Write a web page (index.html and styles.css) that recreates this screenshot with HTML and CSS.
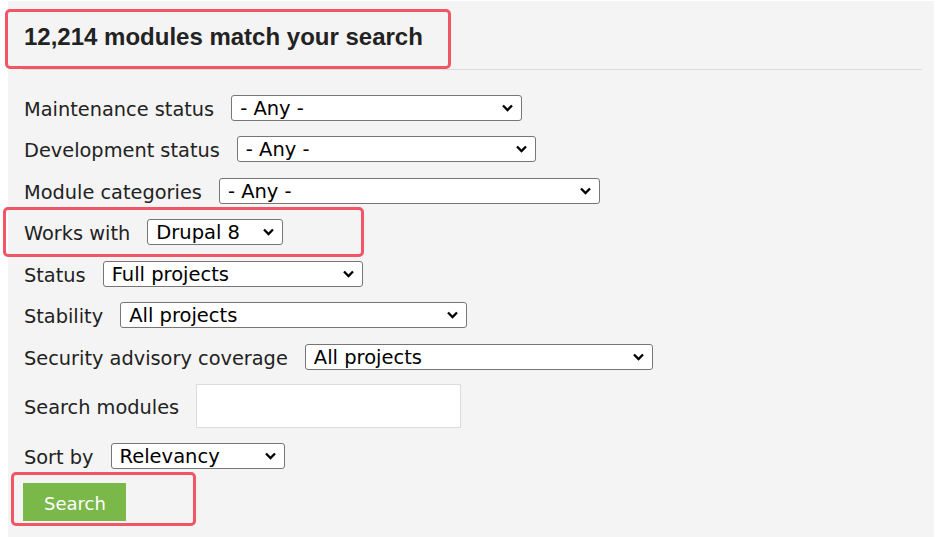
FILE: index.html
```html
<!DOCTYPE html>
<html lang="en">
<head>
<meta charset="utf-8">
<title>Module search</title>
<link rel="stylesheet" href="styles.css">
</head>
<body>
<div class="panel">
  <h2 class="result-count">12,214 modules match your search</h2>
  <form class="filters">
    <div class="row">
      <label class="label">Maintenance status</label>
      <span class="select-wrap w-maint"><select class="select"><option>- Any -</option></select><svg class="chev" viewBox="0 0 12 8"><path d="M1.5 1.5l4.5 4.5 4.5-4.5" /></svg></span>
    </div>
    <div class="row">
      <label class="label">Development status</label>
      <span class="select-wrap w-dev"><select class="select"><option>- Any -</option></select><svg class="chev" viewBox="0 0 12 8"><path d="M1.5 1.5l4.5 4.5 4.5-4.5" /></svg></span>
    </div>
    <div class="row">
      <label class="label">Module categories</label>
      <span class="select-wrap w-cat"><select class="select"><option>- Any -</option></select><svg class="chev" viewBox="0 0 12 8"><path d="M1.5 1.5l4.5 4.5 4.5-4.5" /></svg></span>
    </div>
    <div class="row">
      <label class="label">Works with</label>
      <span class="select-wrap w-works"><select class="select"><option>Drupal 8</option></select><svg class="chev" viewBox="0 0 12 8"><path d="M1.5 1.5l4.5 4.5 4.5-4.5" /></svg></span>
    </div>
    <div class="row">
      <label class="label">Status</label>
      <span class="select-wrap w-status"><select class="select"><option>Full projects</option></select><svg class="chev" viewBox="0 0 12 8"><path d="M1.5 1.5l4.5 4.5 4.5-4.5" /></svg></span>
    </div>
    <div class="row">
      <label class="label">Stability</label>
      <span class="select-wrap w-stab"><select class="select"><option>All projects</option></select><svg class="chev" viewBox="0 0 12 8"><path d="M1.5 1.5l4.5 4.5 4.5-4.5" /></svg></span>
    </div>
    <div class="row">
      <label class="label">Security advisory coverage</label>
      <span class="select-wrap w-sec"><select class="select"><option>All projects</option></select><svg class="chev" viewBox="0 0 12 8"><path d="M1.5 1.5l4.5 4.5 4.5-4.5" /></svg></span>
    </div>
    <div class="row row-input">
      <label class="label">Search modules</label>
      <input class="text-input" type="text">
    </div>
    <div class="row">
      <label class="label">Sort by</label>
      <span class="select-wrap w-sort"><select class="select"><option>Relevancy</option></select><svg class="chev" viewBox="0 0 12 8"><path d="M1.5 1.5l4.5 4.5 4.5-4.5" /></svg></span>
    </div>
    <div class="actions">
      <button class="btn" type="button">Search</button>
    </div>
  </form>
  <div class="mark mark-title"></div>
  <div class="mark mark-works"></div>
  <div class="mark mark-search"></div>
</div>
</body>
</html>
```

FILE: styles.css
```css
html, body {
  margin: 0;
  padding: 0;
  background: #ffffff;
}

body {
  font-family: "DejaVu Sans", Verdana, sans-serif;
  color: #222;
}

.panel {
  position: relative;
  margin: 1px 2px 0 8px;
  padding: 22px 12px 16px 15px;
  background: #f4f4f4;
  min-height: 498px;
}

.result-count {
  margin: 0;
  padding: 0 0 18px 1px;
  border-bottom: 1px solid #dcdcdc;
  font-family: "Liberation Sans", Arial, sans-serif;
  font-weight: bold;
  font-size: 24px;
  line-height: 27.6px;
  color: #222;
}

.filters {
  display: flex;
  flex-direction: column;
  gap: 15.5px;
  padding-top: 25px;
}

.row {
  display: flex;
  align-items: center;
  height: 26px;
}

.row-input {
  height: 44px;
  margin-top: -1.5px;
}

.label {
  font-size: 19.35px;
  color: #222;
  margin-left: 1px;
  margin-right: 17px;
  padding-top: 3px;
  white-space: nowrap;
}

.select-wrap {
  position: relative;
  display: block;
  height: 26px;
}

.select {
  -webkit-appearance: none;
  appearance: none;
  box-sizing: border-box;
  width: 100%;
  height: 26px;
  margin: 0;
  padding: 2px 30px 0 8px;
  border: 1px solid #767676;
  border-radius: 3px;
  background: #fff;
  font-family: "DejaVu Sans", Verdana, sans-serif;
  font-size: 19.5px;
  line-height: 22px;
  color: #000;
}

.chev {
  position: absolute;
  right: 8px;
  top: 9px;
  width: 13px;
  height: 8px;
  fill: none;
  stroke: #000;
  stroke-width: 2.3;
  pointer-events: none;
}

.w-maint { width: 291px; }
.w-dev { width: 299px; }
.w-cat { width: 381px; }
.w-works { width: 136px; }
.w-status { width: 260px; }
.w-stab { width: 347px; }
.w-sec { width: 348px; }
.w-sort { width: 174px; }

.text-input {
  box-sizing: border-box;
  width: 265px;
  height: 44px;
  margin: 0;
  border: 1px solid #dcdcdc;
  background: #fff;
  font-size: 19px;
}

.actions {
  display: flex;
  margin-top: -1.5px;
}

.btn {
  height: 38px;
  padding: 3px 20px 0 21px;
  border: 0;
  background: #7ab84a;
  color: #fff;
  font-family: "DejaVu Sans", Verdana, sans-serif;
  font-size: 18px;
  cursor: pointer;
}

.mark {
  position: absolute;
  box-sizing: border-box;
  border: 3px solid #f25566;
  border-radius: 5px;
  pointer-events: none;
}

.mark-title {
  left: -3px;
  top: 8px;
  width: 446px;
  height: 60px;
}

.mark-works {
  left: -5px;
  top: 206px;
  width: 361px;
  height: 50px;
}

.mark-search {
  left: 3px;
  top: 471px;
  width: 185px;
  height: 54px;
}
```
